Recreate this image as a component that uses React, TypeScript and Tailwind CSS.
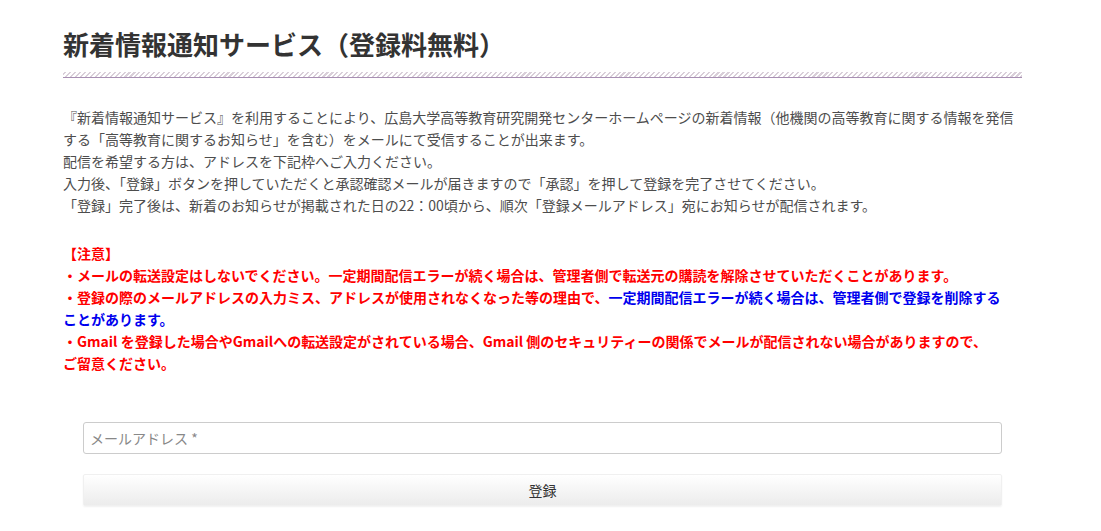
export default function App() {
  const font = "font-['Noto_Sans_CJK_JP','Noto_Sans',sans-serif]";
  return (
    <div className={`min-h-[531px] bg-white ${font}`}>
      <div className="ml-[63px] w-[959px]">
        <h1 className="pt-[26px] text-[26px] font-bold leading-[36px] text-[#333]">
          新着情報通知サービス（登録料無料）
        </h1>
        <div className="mt-[10px]">
          <div className="h-[5px] bg-[repeating-linear-gradient(-45deg,#d9cfd9_0,#d9cfd9_1.5px,#fff_1.5px,#fff_3.5px)]" />
          <div className="h-px bg-[#a88fb3]" />
        </div>

        <p className="mt-[28px] text-[14px] leading-[22px] text-[#4d4d4d]">
          『新着情報通知サービス』を利用することにより、広島大学高等教育研究開発センターホームページの新着情報（他機関の高等教育に関する情報を発信
          <br />
          する「高等教育に関するお知らせ」を含む）をメールにて受信することが出来ます。
          <br />
          配信を希望する方は、アドレスを下記枠へご入力ください。
          <br />
          入力後、「登録」ボタンを押していただくと承認確認メールが届きますので「承認」を押して登録を完了させてください。
          <br />
          「登録」完了後は、新着のお知らせが掲載された日の22：00頃から、順次「登録メールアドレス」宛にお知らせが配信されます。
        </p>

        <p className="mt-[26px] text-[14px] font-bold leading-[22px] text-[#ff0000]">
          【注意】
          <br />
          ・メールの転送設定はしないでください。一定期間配信エラーが続く場合は、管理者側で転送元の購読を解除させていただくことがあります。
          <br />
          ・登録の際のメールアドレスの入力ミス、アドレスが使用されなくなった等の理由で、
          <span className="text-[#0000ee]">一定期間配信エラーが続く場合は、管理者側で登録を削除する</span>
          <br />
          <span className="text-[#0000ee]">ことがあります。</span>
          <br />
          ・Gmail を登録した場合やGmailへの転送設定がされている場合、Gmail 側のセキュリティーの関係でメールが配信されない場合がありますので、
          <br />
          ご留意ください。
        </p>

        <form className="mx-[20px] mt-[48px] flex flex-col gap-[20px]">
          <input
            type="email"
            placeholder="メールアドレス *"
            className="h-[32px] w-full rounded-[3px] border border-[#ccc] px-[6px] text-[14px] text-[#333] outline-none placeholder:text-[#888]"
          />
          <button
            type="button"
            className="h-[32px] w-full rounded-[2px] border border-[#f0f0f0] bg-gradient-to-b from-[#ffffff] to-[#ececec] text-[14px] text-[#333] shadow-[0_1px_2px_rgba(0,0,0,0.06)]"
          >
            登録
          </button>
        </form>
      </div>
    </div>
  );
}
